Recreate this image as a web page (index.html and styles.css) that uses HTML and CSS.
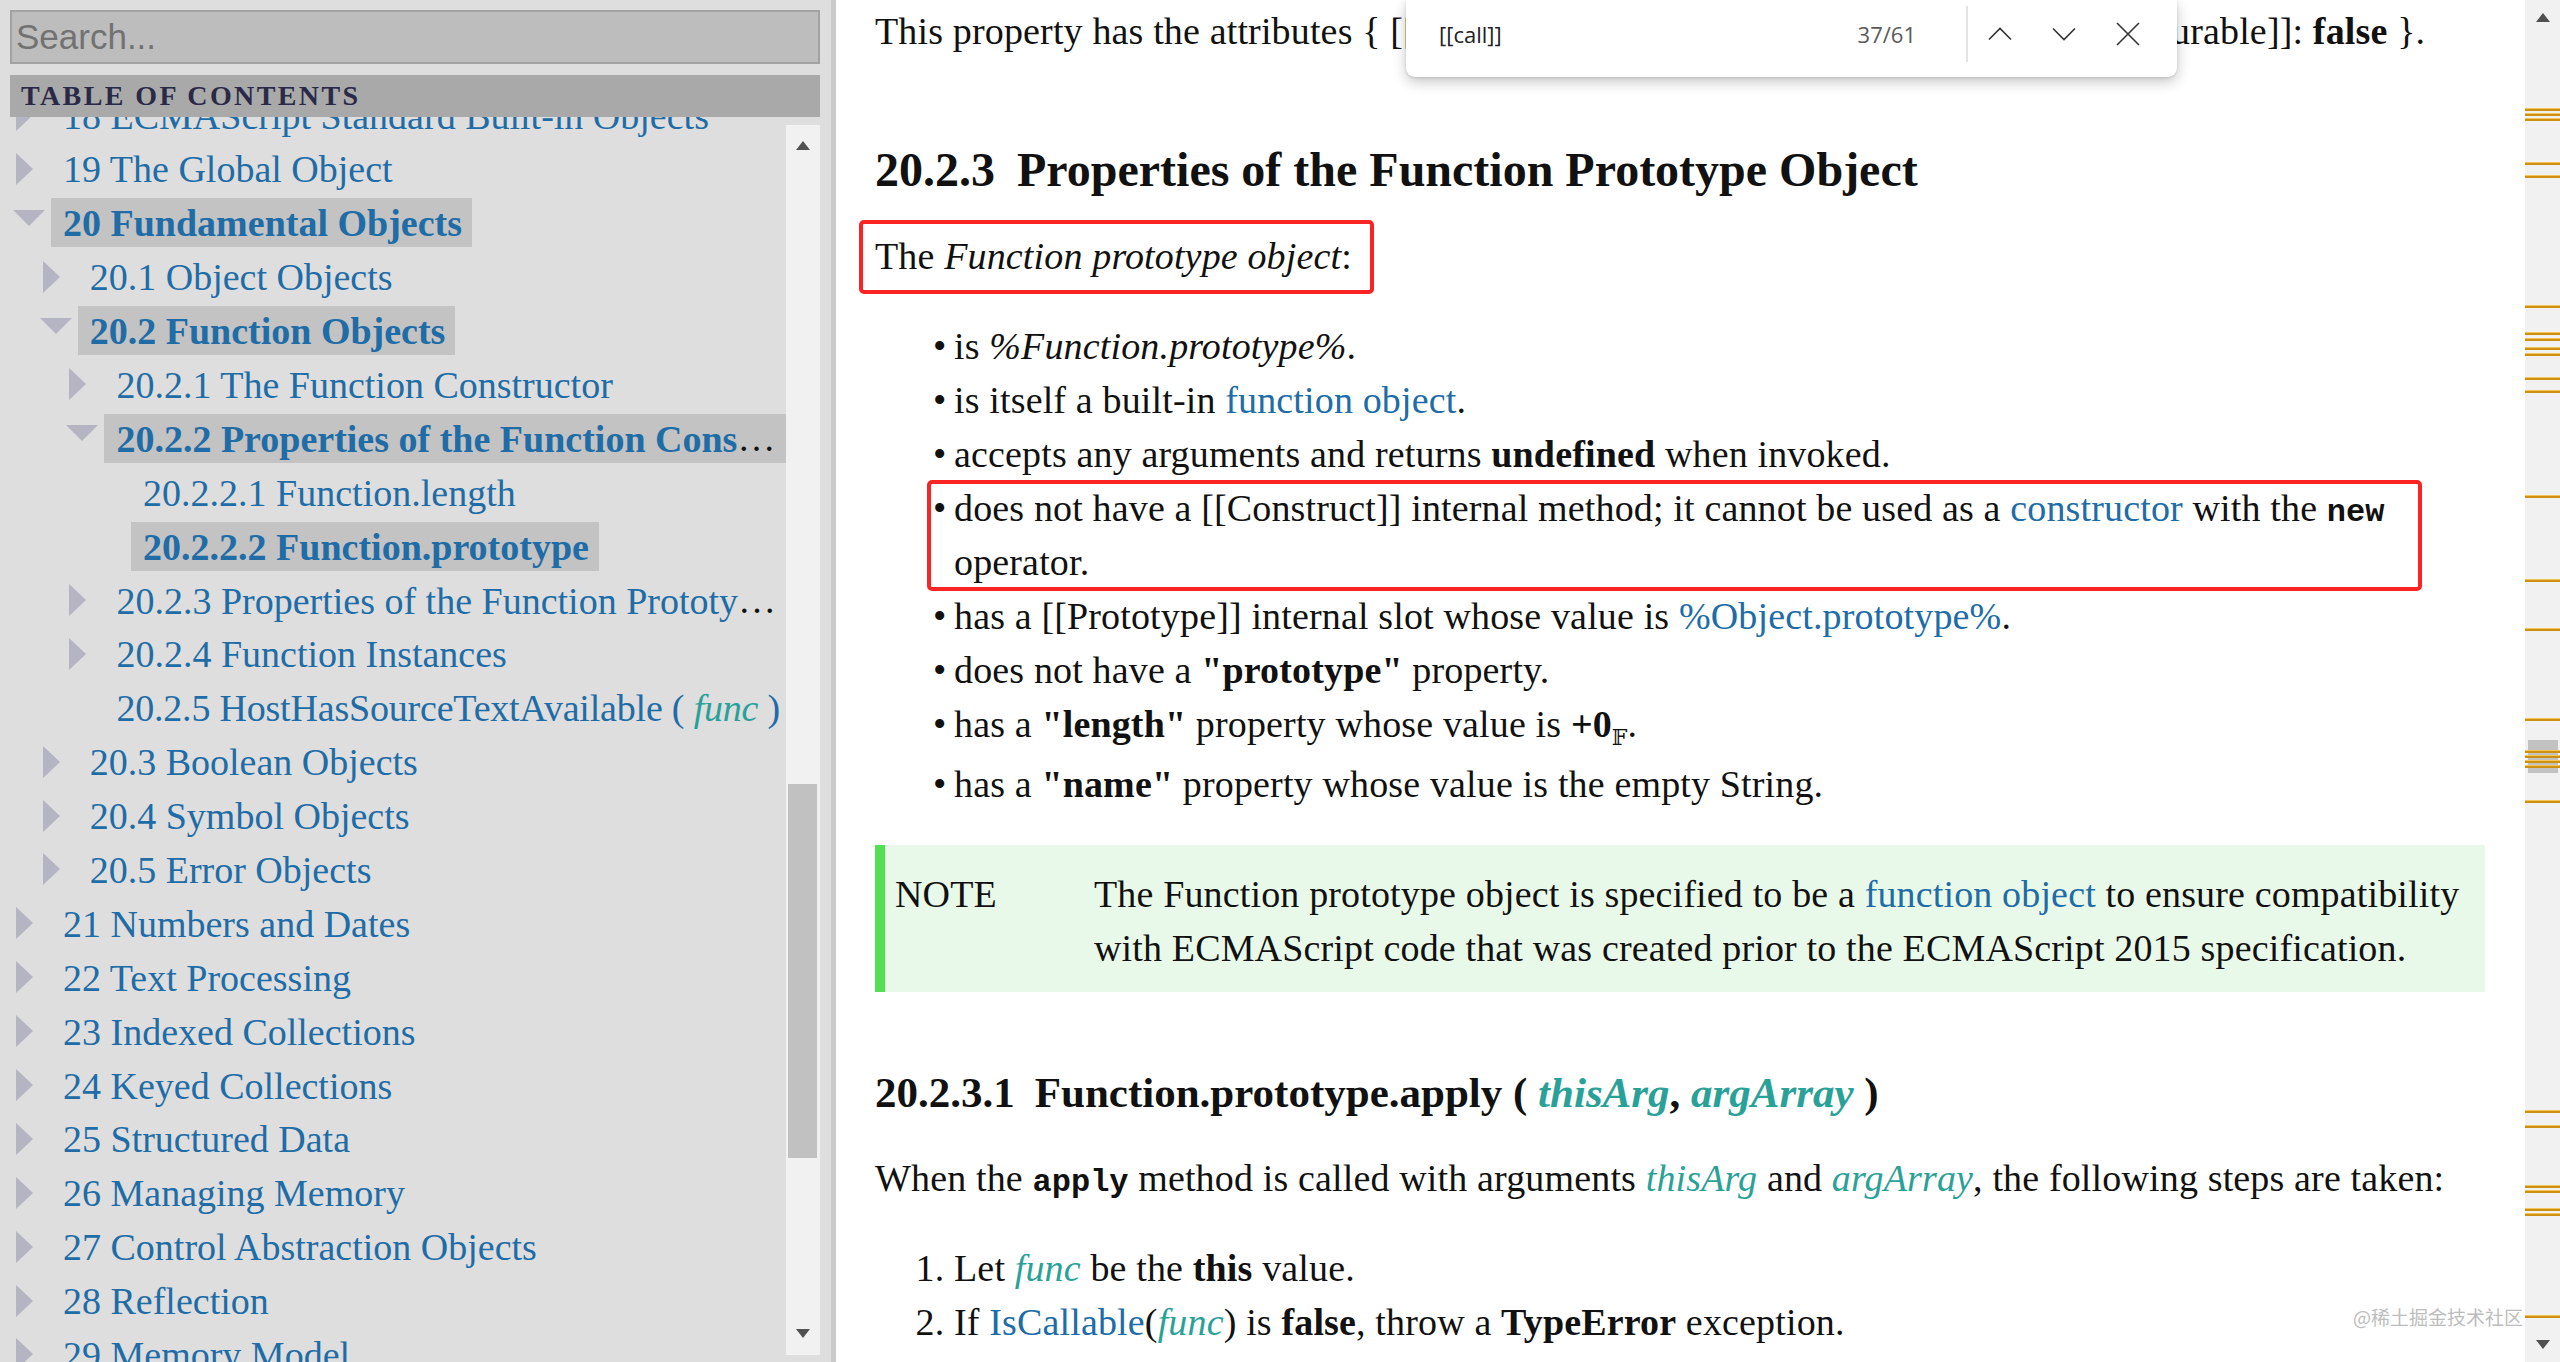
FILE: index.html
```html
<!DOCTYPE html>
<html lang="en">
<head>
<meta charset="utf-8">
<title>ECMAScript Language Specification</title>
<link rel="stylesheet" href="styles.css">
</head>
<body>
<div class="app">
  <aside class="sidebar">
    <input class="search" type="text" placeholder="Search...">
    <div class="toc-head">TABLE OF CONTENTS</div>
    <div class="toc-wrap">
      <div class="toc-view">
        <ol class="toc">
          <li class="l0"><span class="tw r"></span><a>18 ECMAScript Standard Built-in Objects</a></li>
          <li class="l0"><span class="tw r"></span><a>19 The Global Object</a></li>
          <li class="l0"><span class="tw d"></span><a class="on">20 Fundamental Objects</a></li>
          <li class="l1"><span class="tw r"></span><a>20.1 Object Objects</a></li>
          <li class="l1"><span class="tw d"></span><a class="on">20.2 Function Objects</a></li>
          <li class="l2"><span class="tw r"></span><a>20.2.1 The Function Constructor</a></li>
          <li class="l2"><span class="tw d"></span><a class="on">20.2.2 Properties of the Function Constructor</a></li>
          <li class="l3"><span class="tw"></span><a>20.2.2.1 Function.length</a></li>
          <li class="l3"><span class="tw"></span><a class="on">20.2.2.2 Function.prototype</a></li>
          <li class="l2"><span class="tw r"></span><a>20.2.3 Properties of the Function Prototype Object</a></li>
          <li class="l2"><span class="tw r"></span><a>20.2.4 Function Instances</a></li>
          <li class="l2 tight"><span class="tw"></span><a>20.2.5 HostHasSourceTextAvailable ( <var>func</var> )</a></li>
          <li class="l1"><span class="tw r"></span><a>20.3 Boolean Objects</a></li>
          <li class="l1"><span class="tw r"></span><a>20.4 Symbol Objects</a></li>
          <li class="l1"><span class="tw r"></span><a>20.5 Error Objects</a></li>
          <li class="l0"><span class="tw r"></span><a>21 Numbers and Dates</a></li>
          <li class="l0"><span class="tw r"></span><a>22 Text Processing</a></li>
          <li class="l0"><span class="tw r"></span><a>23 Indexed Collections</a></li>
          <li class="l0"><span class="tw r"></span><a>24 Keyed Collections</a></li>
          <li class="l0"><span class="tw r"></span><a>25 Structured Data</a></li>
          <li class="l0"><span class="tw r"></span><a>26 Managing Memory</a></li>
          <li class="l0"><span class="tw r"></span><a>27 Control Abstraction Objects</a></li>
          <li class="l0"><span class="tw r"></span><a>28 Reflection</a></li>
          <li class="l0"><span class="tw r"></span><a>29 Memory Model</a></li>
        </ol>
      </div>
      <div class="vscroll">
        <div class="sbtn"><span class="tri-up"></span></div>
        <div class="sthumb"></div>
        <div class="sfill"></div>
        <div class="sbtn low"><span class="tri-down"></span></div>
      </div>
    </div>
  </aside>

  <main class="content">
    <p class="first">This property has the attributes { [[Writable]]: <b>false</b>, [[Enumerable]]: <b>false</b>, [[Configurable]]: <b>false</b> }.</p>

    <h1><span class="secnum">20.2.3</span>Properties of the Function Prototype Object</h1>

    <p class="redbox">The <i>Function prototype object</i>:</p>

    <ul class="bul">
      <li>is <i>%Function.prototype%</i>.</li>
      <li>is itself a built-in <a>function object</a>.</li>
      <li>accepts any arguments and returns <b>undefined</b> when invoked.</li>
      <li class="hl">does not have a [[Construct]] internal method; it cannot be used as a <a>constructor</a> with the <code>new</code> operator.</li>
      <li>has a [[Prototype]] internal slot whose value is <a>%Object.prototype%</a>.</li>
      <li>does not have a <b>"prototype"</b> property.</li>
      <li class="subline">has a <b>"length"</b> property whose value is <b>+0</b><sub>𝔽</sub>.</li>
      <li>has a <b>"name"</b> property whose value is the empty String.</li>
    </ul>

    <div class="note">
      <span class="note-label">NOTE</span>
      <div class="note-body">The Function prototype object is specified to be a <a>function object</a> to ensure compatibility with ECMAScript code that was created prior to the ECMAScript 2015 specification.</div>
    </div>

    <h2><span class="secnum2">20.2.3.1</span>Function.prototype.apply ( <var>thisArg</var>, <var>argArray</var> )</h2>

    <p class="intro">When the <code>apply</code> method is called with arguments <var>thisArg</var> and <var>argArray</var>, the following steps are taken:</p>

    <ol class="steps">
      <li>Let <var>func</var> be the <b>this</b> value.</li>
      <li>If <a>IsCallable</a>(<var>func</var>) is <b>false</b>, throw a <b>TypeError</b> exception.</li>
    </ol>

    <div class="watermark">@稀土掘金技术社区</div>
  </main>

  <div class="pagebar">
    <span class="pb-up"></span>
    <span class="mk" style="top:108px"></span>
    <span class="mk" style="top:113px"></span>
    <span class="mk" style="top:118px"></span>
    <span class="mk" style="top:162px"></span>
    <span class="mk" style="top:175px"></span>
    <span class="mk" style="top:305px"></span>
    <span class="mk" style="top:332px"></span>
    <span class="mk" style="top:338px"></span>
    <span class="mk" style="top:347px"></span>
    <span class="mk" style="top:353px"></span>
    <span class="mk" style="top:377px"></span>
    <span class="mk" style="top:390px"></span>
    <span class="mk" style="top:495px"></span>
    <span class="mk" style="top:579px"></span>
    <span class="mk" style="top:628px"></span>
    <span class="mk" style="top:718px"></span>
    <span class="pb-thumb"></span>
    <span class="mk" style="top:750px"></span>
    <span class="mk" style="top:755px"></span>
    <span class="mk" style="top:760px"></span>
    <span class="mk" style="top:765px"></span>
    <span class="mk" style="top:800px"></span>
    <span class="mk" style="top:1110px"></span>
    <span class="mk" style="top:1125px"></span>
    <span class="mk" style="top:1185px"></span>
    <span class="mk" style="top:1190px"></span>
    <span class="mk" style="top:1208px"></span>
    <span class="mk" style="top:1213px"></span>
    <span class="mk" style="top:1315px"></span>
    <span class="pb-down"></span>
  </div>
</div>

<div class="findbar">
  <div class="fq">[[call]]</div>
  <div class="fc">37/61</div>
  <div class="fsep"></div>
  <div class="fbtn">
    <svg width="26" height="14" viewBox="0 0 26 14"><polyline points="2,12.5 13,1.5 24,12.5" fill="none" stroke="#333" stroke-width="1.6"/></svg>
  </div>
  <div class="fbtn">
    <svg width="26" height="14" viewBox="0 0 26 14"><polyline points="2,1.5 13,12.5 24,1.5" fill="none" stroke="#333" stroke-width="1.6"/></svg>
  </div>
  <div class="fbtn">
    <svg width="24" height="24" viewBox="0 0 24 24"><path d="M1 1 L23 23 M23 1 L1 23" fill="none" stroke="#333" stroke-width="1.6"/></svg>
  </div>
</div>
</body>
</html>
```

FILE: styles.css
```css
* { box-sizing: border-box; }

html, body {
  margin: 0;
  padding: 0;
  background: #ffffff;
}

body {
  font-family: "Liberation Serif", "Times New Roman", serif;
  color: #111;
  overflow: hidden;
}

.app {
  display: flex;
  height: 1362px;
  overflow: hidden;
}

/* ---------- sidebar ---------- */
.sidebar {
  width: 836px;
  flex: none;
  display: flex;
  flex-direction: column;
  background: #dedede;
  border-right: 5px solid #c9c9c9;
  padding: 10px 11px 0 10px;
}

.search {
  display: block;
  width: 100%;
  height: 54px;
  margin: 0;
  padding: 0 4px;
  border: 2px solid #a2a2a2;
  background: #bdbdbd;
  font-family: "Liberation Sans", Arial, sans-serif;
  font-size: 35px;
  color: #333;
  outline: none;
}
.search::placeholder { color: #727272; }

.toc-head {
  margin-top: 11px;
  height: 42px;
  line-height: 42px;
  padding-left: 11px;
  background: #a9a9a9;
  color: #2a2a48;
  font-family: "Liberation Serif", serif;
  font-weight: bold;
  font-size: 28px;
  letter-spacing: 2.4px;
}

.toc-wrap {
  flex: 1;
  min-height: 0;
  display: flex;
}

.toc-view {
  flex: 1;
  min-width: 0;
  overflow: hidden;
}

.toc {
  list-style: none;
  margin: -28px 0 0 0;
  padding: 0;
}

.toc li {
  height: 53.9px;
  line-height: 53.9px;
  font-size: 38px;
  white-space: nowrap;
  overflow: hidden;
  text-overflow: ellipsis;
  color: #111;
}
.toc .l0 { padding-left: 3px; }
.toc .l1 { padding-left: 29.7px; }
.toc .l2 { padding-left: 56.4px; }
.toc .l3 { padding-left: 83.1px; }
.toc li.tight { letter-spacing: -0.2px; }

.tw {
  display: inline-block;
  width: 38px;
  height: 53.9px;
  vertical-align: top;
}
.tw.r::before {
  content: "";
  display: block;
  width: 0;
  height: 0;
  margin: 10px 0 0 3px;
  border-left: 17px solid #b4b4c2;
  border-top: 16.5px solid transparent;
  border-bottom: 16.5px solid transparent;
}
.tw.d::before {
  content: "";
  display: block;
  width: 0;
  height: 0;
  margin: 13px 0 0 0;
  border-top: 16px solid #b4b4c2;
  border-left: 16px solid transparent;
  border-right: 16px solid transparent;
}

.toc a {
  color: #206ca7;
  text-decoration: none;
  padding: 3.5px 0 3.5px 12px;
}
.toc a.on {
  background: #c3c3c3;
  font-weight: bold;
  padding-right: 10px;
}
.toc var {
  color: #2aa198;
  font-style: italic;
}

.vscroll {
  width: 34px;
  flex: none;
  margin: 8px 0 7px 0;
  background: #f1f1f1;
  display: flex;
  flex-direction: column;
}
.sbtn {
  height: 40px;
  flex: none;
  display: flex;
  align-items: center;
  justify-content: center;
}
.sbtn.low { height: 44px; }
.tri-up {
  width: 0; height: 0;
  border-left: 7px solid transparent;
  border-right: 7px solid transparent;
  border-bottom: 9px solid #505050;
}
.tri-down {
  width: 0; height: 0;
  border-left: 7px solid transparent;
  border-right: 7px solid transparent;
  border-top: 9px solid #505050;
}
.sthumb {
  flex: none;
  height: 374px;
  margin: 619px 3px 0 2px;
  background: #c1c1c1;
}
.sfill { flex: 1; }

/* ---------- main content ---------- */
.content {
  flex: 1;
  min-width: 0;
  position: relative;
  overflow: hidden;
  padding: 4px 40px 0 39px;
  font-size: 38px;
  line-height: 54px;
  letter-spacing: 0.15px;
  color: #111;
}

.content p { margin: 0; }
.content a { color: #206ca7; text-decoration: none; }
.content var { color: #2aa198; font-style: italic; }
.content code {
  font-family: "Liberation Mono", "Courier New", monospace;
  font-weight: bold;
  font-size: 32px;
  line-height: 0;
  letter-spacing: 0;
}

.first { white-space: nowrap; }

h1 {
  margin: 82px 0 0 0;
  font-size: 48px;
  line-height: 60px;
  font-weight: bold;
  letter-spacing: 0;
}
.secnum { margin-right: 22px; }

.redbox {
  position: relative;
  display: inline-block;
  margin-top: 29px !important;
}
.redbox::after {
  content: "";
  position: absolute;
  left: -16px;
  right: -22px;
  top: -9px;
  bottom: -11px;
  border: 4px solid #fb2424;
  border-radius: 5px;
}

.bul {
  list-style: none;
  margin: 36px 0 0 0;
  padding: 0 0 0 79px;
}
.bul li { position: relative; }
.bul li::before {
  content: "•";
  display: inline-block;
  width: 21px;
  margin-left: -21px;
}
.bul li.hl::after {
  content: "";
  position: absolute;
  left: -27px;
  right: 63px;
  top: -1px;
  bottom: -2px;
  border: 4px solid #fb2424;
  border-radius: 5px;
}
.bul li.subline { margin-bottom: 6px; }
.bul sub {
  font-family: "DejaVu Serif", serif;
  font-size: 22px;
  line-height: 0;
  vertical-align: -8px;
  letter-spacing: 0;
}

.note {
  display: flex;
  margin-top: 34px;
  padding: 22px 8px 17px 10px;
  background: #e9f9e9;
  border-left: 10px solid #52e052;
}
.note-label {
  width: 199px;
  flex: none;
}
.note-body { flex: 1; }

h2 {
  margin: 74px 0 0 0;
  font-size: 43px;
  line-height: 54px;
  font-weight: bold;
  letter-spacing: 0;
}
.secnum2 { margin-right: 20px; }

.intro { margin-top: 31px !important; }

.steps {
  margin: 36px 0 0 0;
  padding: 0 0 0 79px;
}

.watermark {
  position: absolute;
  right: 2px;
  top: 1304px;
  font-family: "Noto Sans CJK SC", sans-serif;
  font-size: 19px;
  line-height: 26px;
  letter-spacing: 0;
  color: #bdbdbd;
}

/* ---------- page scrollbar ---------- */
.pagebar {
  width: 35px;
  flex: none;
  position: relative;
  background: #f1f1f1;
}
.pb-up {
  position: absolute;
  left: 11px;
  top: 13px;
  width: 0; height: 0;
  border-left: 7px solid transparent;
  border-right: 7px solid transparent;
  border-bottom: 9px solid #505050;
}
.pb-down {
  position: absolute;
  left: 11px;
  top: 1340px;
  width: 0; height: 0;
  border-left: 7px solid transparent;
  border-right: 7px solid transparent;
  border-top: 9px solid #505050;
}
.pb-thumb {
  position: absolute;
  left: 3px;
  right: 2px;
  top: 740px;
  height: 33px;
  background: #c2c2c2;
}
.mk {
  position: absolute;
  left: 0;
  right: 0;
  height: 3px;
  background: #cf8f12;
  border-top: 1px solid #f2c55a;
}

/* ---------- find bar ---------- */
.findbar {
  position: absolute;
  left: 1406px;
  top: 0;
  width: 771px;
  height: 77px;
  display: flex;
  align-items: center;
  background: #ffffff;
  border-radius: 0 0 9px 9px;
  box-shadow: 0 5px 14px rgba(0, 0, 0, 0.22), 0 1px 3px rgba(0, 0, 0, 0.12);
  font-family: "Open Sans", "Noto Sans", sans-serif;
  font-size: 22px;
  color: #222;
  padding: 0 17px 9px 0;
}
.fq {
  flex: 1;
  padding-left: 33px;
}
.fc {
  color: #5a5a5a;
  margin-right: 50px;
}
.fsep {
  width: 2px;
  height: 56px;
  background: #e3e3e3;
}
.fbtn {
  width: 64px;
  height: 48px;
  display: flex;
  align-items: center;
  justify-content: center;
}
.fbtn:first-of-type { margin-left: 16px; }
```
